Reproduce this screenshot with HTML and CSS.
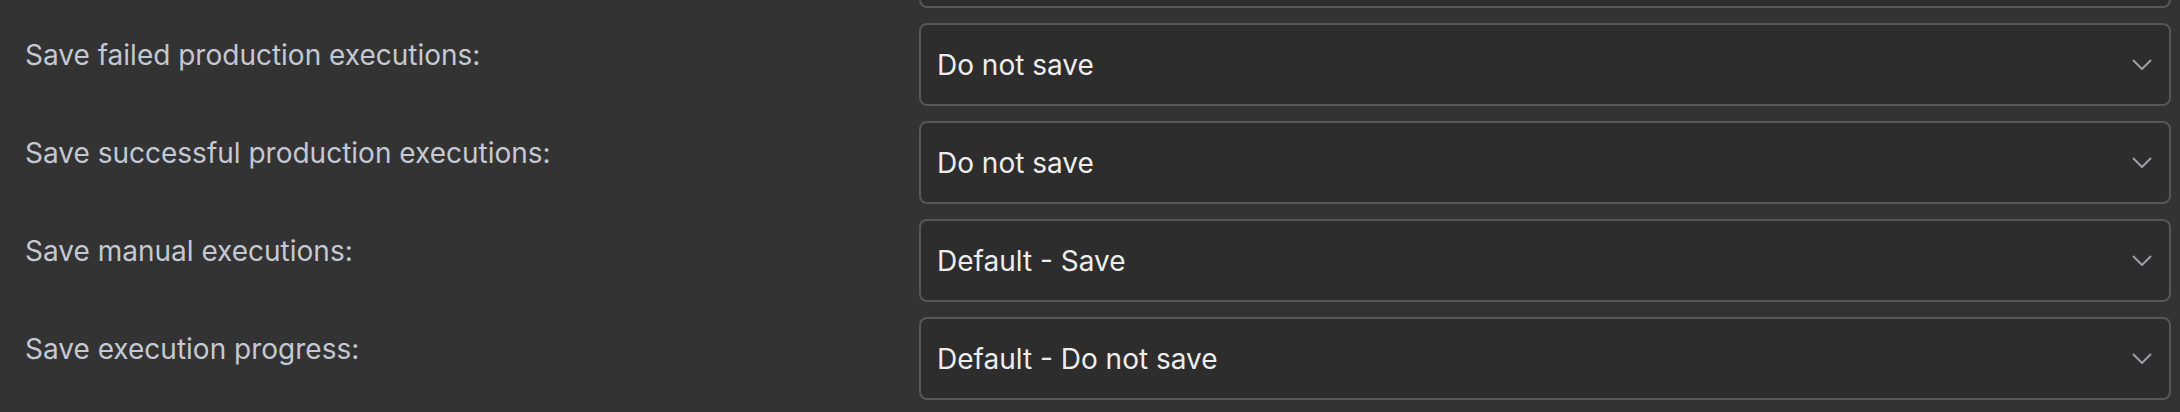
FILE: index.html
```html
<!DOCTYPE html>
<html lang="en">
<head>
<meta charset="utf-8">
<title>Workflow settings</title>
<link rel="stylesheet" href="styles.css">
</head>
<body>
<div class="settings">
  <div class="row row-prev">
    <div class="label"></div>
    <div class="select"><span class="value"></span>
      <svg class="chev" viewBox="0 0 20 11"><path d="M1 1 L10 10 L19 1"/></svg></div>
  </div>
  <div class="row">
    <div class="label">Save failed production executions:</div>
    <div class="select"><span class="value">Do not save</span>
      <svg class="chev" viewBox="0 0 20 11"><path d="M1 1 L10 10 L19 1"/></svg></div>
  </div>
  <div class="row">
    <div class="label">Save successful production executions:</div>
    <div class="select"><span class="value">Do not save</span>
      <svg class="chev" viewBox="0 0 20 11"><path d="M1 1 L10 10 L19 1"/></svg></div>
  </div>
  <div class="row">
    <div class="label">Save manual executions:</div>
    <div class="select"><span class="value">Default - Save</span>
      <svg class="chev" viewBox="0 0 20 11"><path d="M1 1 L10 10 L19 1"/></svg></div>
  </div>
  <div class="row">
    <div class="label">Save execution progress:</div>
    <div class="select"><span class="value">Default - Do not save</span>
      <svg class="chev" viewBox="0 0 20 11"><path d="M1 1 L10 10 L19 1"/></svg></div>
  </div>
</div>
</body>
</html>
```

FILE: styles.css
```css
html, body {
  margin: 0;
  padding: 0;
  background: #333333;
  height: 100%;
  overflow: hidden;
}
body {
  font-family: Inter, "Noto Sans", sans-serif;
}
.settings {
  display: flex;
  flex-direction: column;
  gap: 15px;
  margin-top: -75px;
  padding: 0 9px 0 25px;
}
.row {
  display: grid;
  grid-template-columns: 894px 1fr;
  align-items: start;
}
.label {
  font-size: 28px;
  line-height: 34px;
  color: #c4c8d2;
  padding-top: 15px;
  white-space: nowrap;
}
.select {
  height: 83px;
  box-sizing: border-box;
  border: 2px solid #575757;
  border-radius: 8px;
  background: #2d2d2d;
  display: flex;
  align-items: center;
  justify-content: space-between;
  padding: 0 17px 0 16px;
}
.value {
  font-size: 28px;
  color: #ededed;
  white-space: nowrap;
}
.chev {
  width: 20px;
  height: 11px;
  fill: none;
  stroke: #9a9ea9;
  stroke-width: 2;
}
```
